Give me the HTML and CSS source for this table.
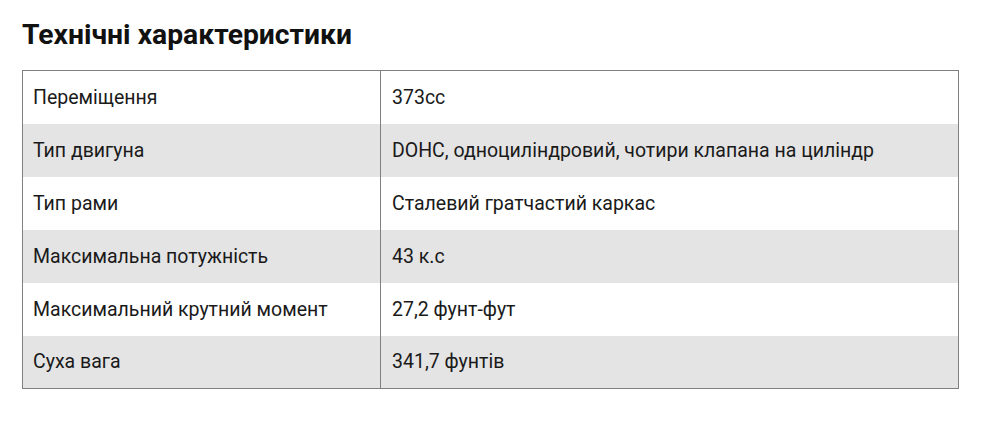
FILE: index.html
```html
<!DOCTYPE html>
<html lang="uk">
<head>
<meta charset="utf-8">
<link rel="stylesheet" href="styles.css">
</head>
<body>
<section class="specs">
  <h2 class="specs-title">Технічні характеристики</h2>
  <table class="specs-table">
    <tbody>
      <tr><td>Переміщення</td><td>373cc</td></tr>
      <tr class="alt"><td>Тип двигуна</td><td>DOHC, одноциліндровий, чотири клапана на циліндр</td></tr>
      <tr><td>Тип рами</td><td>Сталевий гратчастий каркас</td></tr>
      <tr class="alt"><td>Максимальна потужність</td><td>43 к.с</td></tr>
      <tr><td>Максимальний крутний момент</td><td>27,2 фунт-фут</td></tr>
      <tr class="alt"><td>Суха вага</td><td>341,7 фунтів</td></tr>
    </tbody>
  </table>
</section>
</body>
</html>
```
FILE: styles.css
```css
html, body {
  margin: 0;
  padding: 0;
  background: #fff;
}
body {
  font-family: Roboto, "Noto Sans", sans-serif;
  color: #1a1a1a;
}
.specs {
  padding: 18px 46px 0 22px;
}
.specs-title {
  margin: 0 0 18px;
  font-size: 28.3px;
  line-height: 34px;
  font-weight: 700;
  color: #111;
}
.specs-table {
  width: 937px;
  border-collapse: collapse;
  border: 1px solid #808080;
}
.specs-table td {
  height: 53px;
  padding: 0 10px;
  font-size: 19.5px;
  box-sizing: border-box;
  vertical-align: middle;
}
.specs-table td:first-child {
  width: 358px;
  border-right: 1px solid #808080;
}
.specs-table td + td {
  padding-left: 11px;
}
.specs-table tr.alt td {
  background: #e4e4e4;
}
```
